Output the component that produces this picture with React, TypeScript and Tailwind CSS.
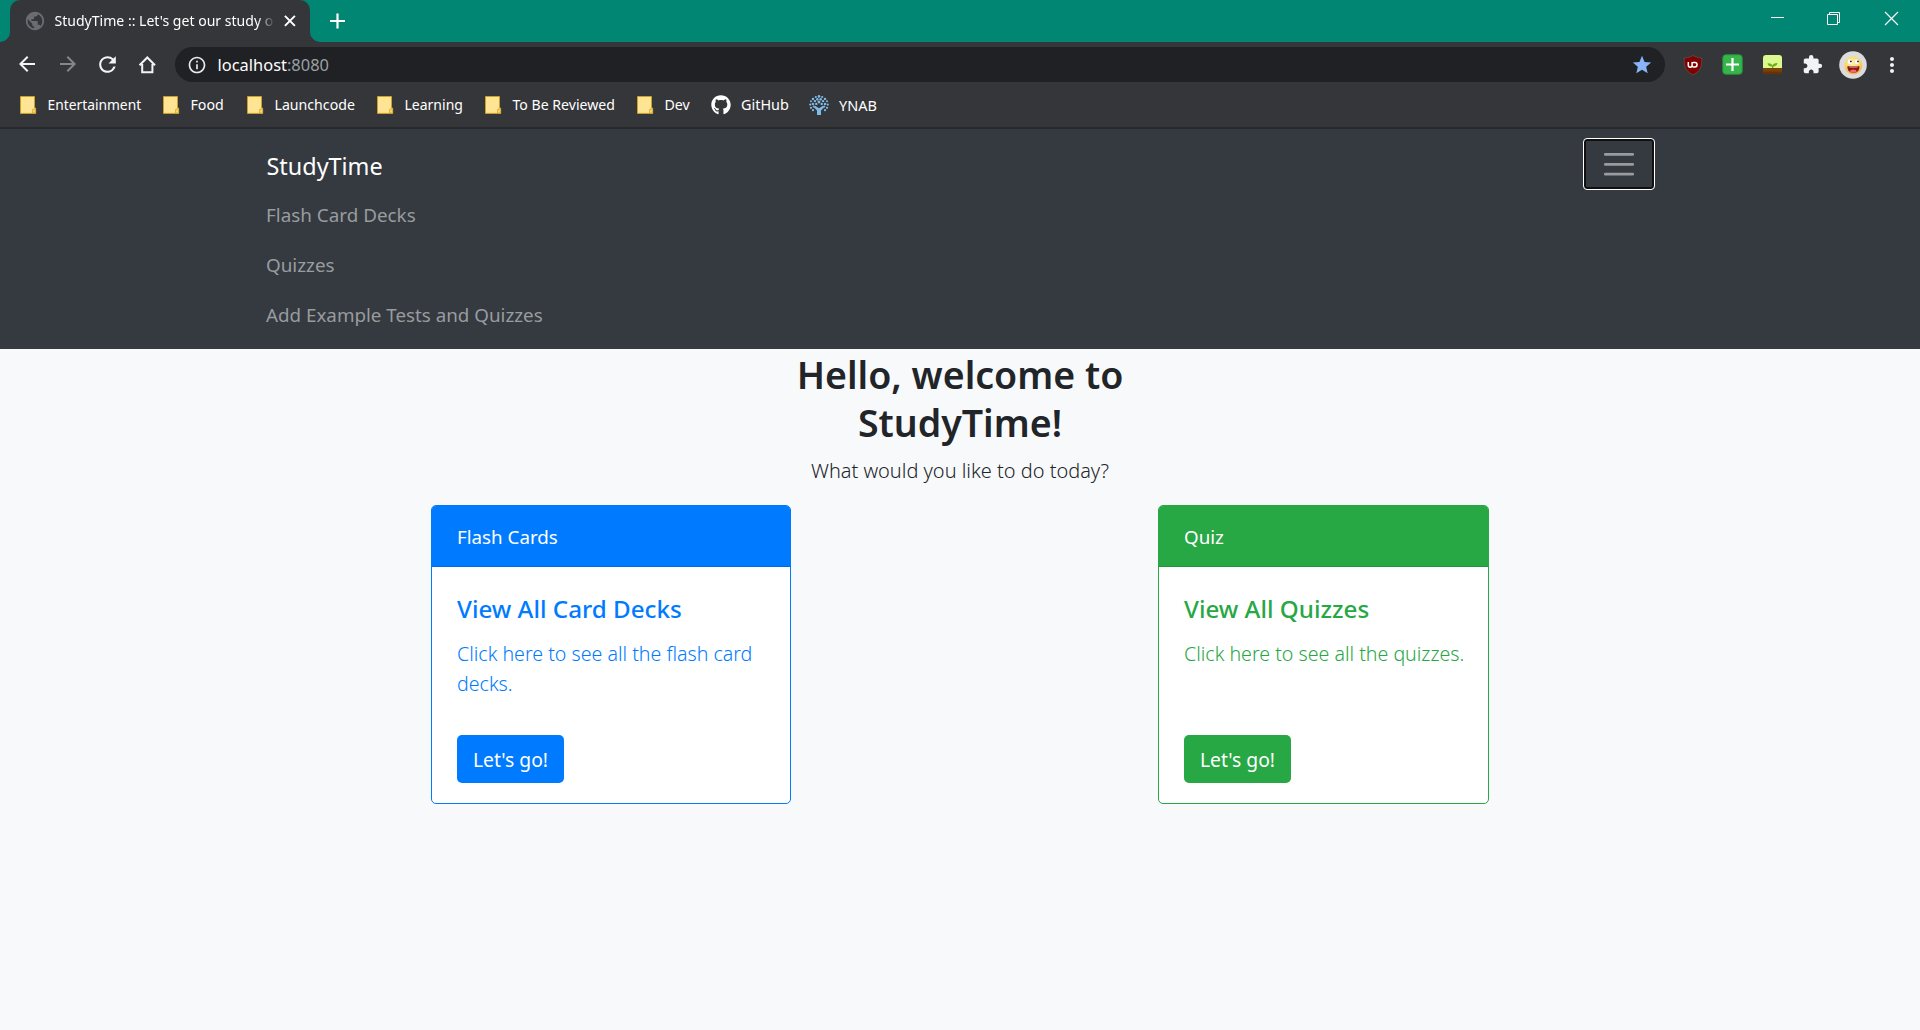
import React from "react";
import { FaGithub } from "react-icons/fa";
import { MdArrowBack, MdArrowForward, MdExtension, MdInfoOutline, MdMoreVert, MdPublic, MdRefresh, MdStar } from "react-icons/md";

const FolderIcon = () => (
  <svg className="h-5 w-5 shrink-0" viewBox="0 0 20 20">
    <path d="M2.5 1.5h14v12h1.2v4.9H2.5z" fill="#ffe593" stroke="#c9a02c" />
    <path d="M14.5 18v-3.5h1.6v-1.6h1.4V18z" fill="#f8d568" stroke="#d5ac3b" strokeWidth="0.8" />
  </svg>
);

const LEAVES: [number, number, number][] = [
  [10, 1.4, 1.3], [6.8, 2, 1.1], [13.2, 2, 1.1], [4, 3.9, 1.2], [16, 3.9, 1.2],
  [8.3, 4.3, 1.2], [11.7, 4.3, 1.2], [2, 6.3, 1], [18, 6.3, 1], [5.9, 6.1, 1.2],
  [14.1, 6.1, 1.2], [10, 7, 1.4], [1.2, 9.6, 1.1], [18.8, 9.6, 1.1], [3.9, 8.9, 1.2],
  [16.1, 8.9, 1.2], [7.3, 8.9, 1.2], [12.7, 8.9, 1.2], [2, 12.8, 1.1], [18, 12.8, 1.1],
  [4.7, 11.6, 1], [15.3, 11.6, 1], [4, 15.2, 1.1], [16, 15.2, 1.1],
];

const TreeIcon = () => (
  <svg className="h-5 w-5 shrink-0" viewBox="0 0 20 20" fill="#7fbbe6">
    {LEAVES.map(([x, y, r]) => (
      <circle key={`${x}-${y}`} cx={x} cy={y} r={r} />
    ))}
    <path d="M8 20v-4.400L4.600 12l1.500-1.200L10 13.200l3.900-2.400 1.500 1.200-3.400 3.600V20z" />
  </svg>
);

type Bookmark = { label: string; width: string; text: string; kind?: "github" | "tree" };

const BOOKMARKS: Bookmark[] = [
  { label: "Entertainment", width: "w-[143px]", text: "text-[13.8px]" },
  { label: "Food", width: "w-[84px]", text: "text-[14.2px]" },
  { label: "Launchcode", width: "w-[130px]", text: "text-[14.15px]" },
  { label: "Learning", width: "w-[108px]", text: "text-[14px]" },
  { label: "To Be Reviewed", width: "w-[152px]", text: "text-[14.1px]" },
  { label: "Dev", width: "w-[76px]", text: "text-[14.2px]" },
  { label: "GitHub", width: "w-[98px]", text: "text-[14.4px]", kind: "github" },
  { label: "YNAB", width: "w-[80px]", text: "text-[14.5px]", kind: "tree" },
];

function TabStrip() {
  return (
    <div className="flex h-[42px] bg-[#008673]">
      <div className="flex w-[10px] items-end bg-[#35363a]">
        <div className="h-[42px] w-[10px] rounded-br-[10px] bg-[#008673]" />
      </div>
      <div className="flex w-[300px] items-center rounded-t-[10px] bg-[#35363a] pl-[14px]">
        <MdPublic className="h-[22px] w-[22px] shrink-0 text-[#696c71]" />
        <div className="ml-[8.5px] w-[220px] text-[14.06px] leading-[20px] whitespace-nowrap text-white [mask-image:linear-gradient(to_right,black_202px,transparent_220px)]">
          StudyTime :: Let's get our study o
        </div>
        <svg className="ml-[7.500px] h-4 w-4 shrink-0" viewBox="0 0 16 16" stroke="#fff" strokeWidth="2">
          <path d="M2.900 2.900l10 10M12.900 2.900l-10 10" />
        </svg>
      </div>
      <div className="w-[10px] bg-[#35363a]">
        <div className="h-[42px] w-[10px] rounded-bl-[10px] bg-[#008673]" />
      </div>
      <svg className="mt-[13px] ml-[9px] h-4 w-4" viewBox="0 0 16 16" stroke="#fff" strokeWidth="2.2">
        <path d="M1 8h15M8.500 .6v14.800" />
      </svg>
      <svg className="mt-[11px] mr-[41px] ml-auto h-[15px] w-[15px]" viewBox="0 0 15 15" stroke="#fff">
        <path d="M1 6.5h13" />
      </svg>
      <svg className="mt-[11px] mr-[43px] h-[15px] w-[15px]" viewBox="0 0 15 15" stroke="#fff" fill="none">
        <path d="M1.500 3.500h10v10h-10zM3.500 3.500v-2h10v10h-2" />
      </svg>
      <svg className="mt-[11px] mr-[21px] h-[15px] w-[15px]" viewBox="0 0 15 15" stroke="#fff" strokeWidth="1.2">
        <path d="M1 1l13 13M14 1L1 14" />
      </svg>
    </div>
  );
}

const Shield = () => (
  <svg className="h-5 w-5" viewBox="0 0 20 20">
    <path d="M10 .5C7.500 2 4.500 3 1.300 3.100 1 11 2 16 10 19.800 18 16 19 11 18.700 3.100 15.500 3 12.500 2 10 .5z" fill="#800000" stroke="#666" strokeWidth="0.5" />
    <path d="M5.300 6.900v3.400a1.900 1.900 0 0 0 3.800 0V6.900M9.800 7.600h2.100a2.100 2.100 0 0 1 0 4.300h-1.600c-.8 0-1.200-.6-1.200-1.600" fill="none" stroke="#fff" strokeWidth="1.500" />
  </svg>
);

const PlusTile = () => (
  <svg className="h-[21px] w-[21px]" viewBox="0 0 21 21">
    <rect x="0.800" y="0.800" width="19.400" height="19.400" rx="3" fill="#38b54a" stroke="#23963a" />
    <path d="M4 10.500h13M10.500 4v13" stroke="#fff" strokeWidth="2.200" />
  </svg>
);

const Sprout = () => (
  <svg className="h-[19px] w-[19px]" viewBox="0 0 19 19">
    <path d="M3 0h13a3 3 0 0 1 3 3v10H0V3a3 3 0 0 1 3-3z" fill="#dcf98f" />
    <path d="M0 13h19v3a3 3 0 0 1-3 3H3a3 3 0 0 1-3-3z" fill="#7c420b" />
    <path d="M0 16.500h19A3 3 0 0 1 16 19H3a3 3 0 0 1-3-2.500z" fill="#673303" />
    <path d="M9 13v-1.600C6.800 11.700 5 10.500 4.500 8.400c2.500-.2 4.100.5 4.900 2 1-1.500 2.800-2.400 5.100-2.300-.4 2.400-2 3.500-4.200 3.300V13z" fill="#72ac12" />
  </svg>
);

const Avatar = () => (
  <svg className="h-7 w-7" viewBox="0 0 28 28">
    <defs>
      <radialGradient id="face" cx="0.450" cy="0.350" r="0.700">
        <stop offset="0" stopColor="#fff3b0" />
        <stop offset="0.600" stopColor="#fbd565" />
        <stop offset="1" stopColor="#f0a63c" />
      </radialGradient>
    </defs>
    <circle cx="14" cy="14" r="13.800" fill="#dcdcdd" />
    <circle cx="14.300" cy="14.500" r="8.900" fill="url(#face)" />
    <ellipse cx="11" cy="10.700" rx="2.200" ry="2.200" fill="#fff" />
    <ellipse cx="18" cy="10.700" rx="2.200" ry="2.200" fill="#fff" />
    <circle cx="11.900" cy="10.400" r="0.900" fill="#222" />
    <circle cx="19" cy="10.400" r="0.900" fill="#222" />
    <path d="M8.300 15.300h12.200c0 4.200-2.200 6.600-6 6.600s-6.200-2.400-6.200-6.600z" fill="#8f1515" />
    <path d="M10.500 15.700h8v.7h-8z" fill="#f3dcdc" />
    <ellipse cx="14.300" cy="20.200" rx="3.200" ry="1.600" fill="#ee6a78" />
  </svg>
);

function Toolbar() {
  return (
    <div className="flex h-[45px] items-start bg-[#35363a] pt-[5px] pl-[7px]">
      <div className="flex h-[34px] w-[160px] items-center text-[#f1f3f4]">
        <div className="flex w-10 justify-center"><MdArrowBack size={24} /></div>
        <div className="flex w-10 justify-center pl-px text-[#85868a]"><MdArrowForward size={24} /></div>
        <div className="flex w-10 justify-center"><MdRefresh size={25} /></div>
        <div className="flex w-10 justify-center">
          <svg className="h-5 w-5" viewBox="0 0 20 20" fill="none" stroke="currentColor" strokeWidth="2">
            <path d="M2.500 11.200L10.300 3.500l7.700 7.700M5.200 10v8.200h10.200V10" />
          </svg>
        </div>
      </div>
      <div className="ml-[8px] flex h-[35px] w-[1490px] items-center rounded-full bg-[#202124] pr-[12px] pl-[12px]">
        <MdInfoOutline size={20} className="text-[#e8eaed]" />
        <div className="ml-[10.500px] text-[16.45px] leading-[24px] text-white">
          localhost<span className="text-[#9aa0a6]">:8080</span>
        </div>
        <MdStar size={22} className="ml-auto text-[#8ab4f8]" />
      </div>
      <div className="ml-[7.5px] flex h-[35px] items-center">
        <div className="flex w-10 justify-center"><Shield /></div>
        <div className="flex w-10 justify-center"><PlusTile /></div>
        <div className="flex w-10 justify-center"><Sprout /></div>
        <div className="flex w-10 justify-center"><MdExtension size={21} className="text-[#f1f3f4]" /></div>
        <div className="flex w-10 justify-center"><Avatar /></div>
        <div className="flex w-10 justify-center pr-px"><MdMoreVert size={24} className="text-[#f1f3f4]" /></div>
      </div>
    </div>
  );
}

function BookmarksBar() {
  return (
    <div className="flex h-[42px] border-b-2 border-[#28292b] bg-[#35363a] pb-1 pl-[18px]">
      {BOOKMARKS.map((b) => (
        <div key={b.label} className={`flex items-center ${b.kind ? "gap-2.5" : "gap-[9.500px]"} ${b.width}`}>
          {b.kind === "github" ? <FaGithub size={20} className="shrink-0 text-white" /> : b.kind === "tree" ? <TreeIcon /> : <FolderIcon />}
          <span className={`leading-5 whitespace-nowrap text-white ${b.text}`}>{b.label}</span>
        </div>
      ))}
    </div>
  );
}

function Navbar() {
  return (
    <nav className="h-[220px] bg-[#343a40] px-[266px] pt-[9px]">
      <div className="flex h-[51px] items-start">
        <a className="pt-[10px] pl-[0.500px] text-[23.4px] leading-[36px] text-white">StudyTime</a>
        <button className="-mr-px ml-auto flex h-[52px] w-[72px] items-center justify-center rounded-[4px] border border-white bg-[#343a40] shadow-[inset_0_0_0_2px_#101010]">
          <svg className="h-[30px] w-[30px]" viewBox="0 0 30 30" stroke="#999c9f" strokeWidth="2.700" strokeLinecap="round">
            <path d="M1.250 5.400h27.500M1.250 15.300h27.500M1.250 25.200h27.500" />
          </svg>
        </button>
      </div>
      <div className="flex flex-col text-[18.85px] text-[#999c9f]">
        <a className="flex h-[50px] items-center pt-[3px]">Flash Card Decks</a>
        <a className="flex h-[50px] items-center pt-[3px]">Quizzes</a>
        <a className="flex h-[50px] items-center pt-[3px] text-[18.8px]">Add Example Tests and Quizzes</a>
      </div>
    </nav>
  );
}

type CardProps = {
  heading: string;
  title: string;
  body: string;
  width: string;
  border: string;
  fill: string;
  divider: string;
  color: string;
};

function Card({ heading, title, body, width, border, fill, divider, color }: CardProps) {
  return (
    <section className={`flex h-[299px] flex-col overflow-hidden rounded-[5px] border bg-white ${width} ${border}`}>
      <header className={`flex h-[61px] shrink-0 items-center border-b px-[25px] pt-0.5 text-[18.75px] text-white ${fill} ${divider}`}>
        {heading}
      </header>
      <div className={`flex flex-1 flex-col items-start px-[25px] pt-[27px] pb-5 ${color}`}>
        <h5 className="text-[24.2px] leading-[30px] font-medium">{title}</h5>
        <p className="mt-[15px] w-[310px] text-[19.6px] leading-[30px] font-light">{body}</p>
        <button className={`mt-auto h-12 w-[107px] rounded-[5px] pt-px text-[19.3px] leading-[30px] text-white ${fill}`}>Let's go!</button>
      </div>
    </section>
  );
}

export default function App() {
  return (
    <div className="flex h-[1030px] w-[1920px] flex-col overflow-hidden bg-[#f8f9fb] font-['Noto_Sans',sans-serif]">
      <TabStrip />
      <Toolbar />
      <BookmarksBar />
      <Navbar />
      <main className="flex flex-col">
        <h1 className="pt-0.5 text-center text-[37.5px] leading-[48px] font-semibold text-[#212529]">
          Hello, welcome to
          <br />
          StudyTime!
        </h1>
        <p className="mt-[9px] text-center text-[19.95px] leading-[30px] font-light text-[#212529]">What would you like to do today?</p>
        <div className="mt-[19px] flex justify-between pr-[431px] pl-[431px]">
          <Card heading="Flash Cards" title="View All Card Decks" body="Click here to see all the flash card decks." width="w-[360px]" border="border-[#007bff]" fill="bg-[#007bff]" divider="border-[#006cdf]" color="text-[#007bff]" />
          <Card heading="Quiz" title="View All Quizzes" body="Click here to see all the quizzes." width="w-[331px]" border="border-[#28a745]" fill="bg-[#28a745]" divider="border-[#23933d]" color="text-[#28a745]" />
        </div>
      </main>
    </div>
  );
}
